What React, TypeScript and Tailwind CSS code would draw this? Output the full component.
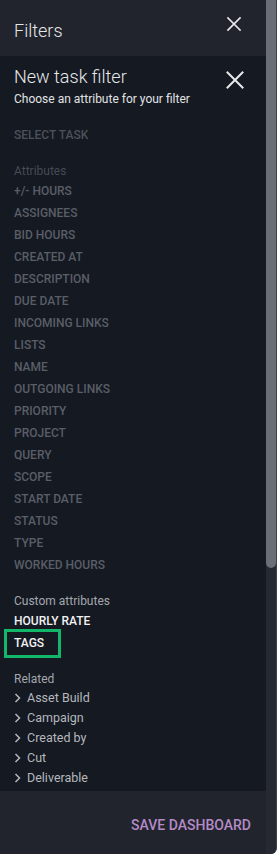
import type { ReactNode } from "react";

const attributes = [
  "+/- HOURS",
  "ASSIGNEES",
  "BID HOURS",
  "CREATED AT",
  "DESCRIPTION",
  "DUE DATE",
  "INCOMING LINKS",
  "LISTS",
  "NAME",
  "OUTGOING LINKS",
  "PRIORITY",
  "PROJECT",
  "QUERY",
  "SCOPE",
  "START DATE",
  "STATUS",
  "TYPE",
  "WORKED HOURS",
];

const related = ["Asset Build", "Campaign", "Created by", "Cut", "Deliverable"];

function CloseIcon({ size, stroke }: { size: number; stroke: number }) {
  return (
    <svg
      width={size}
      height={size}
      viewBox="0 0 24 24"
      fill="none"
      stroke="#e8e9eb"
      strokeWidth={stroke}
      strokeLinecap="square"
    >
      <path d="M6 6l12 12M18 6L6 18" />
    </svg>
  );
}

function Chevron() {
  return (
    <svg width="8" height="10" viewBox="0 0 8 10" fill="none" stroke="#b5b8bd" strokeWidth="1.5">
      <path d="M1.5 1l4 4-4 4" />
    </svg>
  );
}

function SectionLabel({ children, className }: { children: ReactNode; className: string }) {
  return <div className={`h-[18px] text-[12px] leading-[18px] ${className}`}>{children}</div>;
}

export default function App() {
  return (
    <div
      className="flex h-[854px] w-[277px] overflow-hidden rounded-br-[6px] border-r border-[#3d4048] bg-[#21242c]"
      style={{ fontFamily: "Roboto, 'Liberation Sans', sans-serif" }}
    >
      <div className="flex w-[266px] flex-col">
        <header className="flex h-[56px] shrink-0 items-start justify-between pl-[14px] pr-[20px] pt-[19px]">
          <h1 className="text-[18px] font-light leading-[24px] text-[#e6e7e9]">Filters</h1>
          <div className="-mt-[7px]">
            <CloseIcon size={24} stroke={1.7} />
          </div>
        </header>

        <section className="h-[735px] shrink-0 overflow-hidden bg-[#141922] pl-[14px] pt-[9px]">
          <div className="flex items-start justify-between pr-[16px]">
            <div>
              <h2 className="text-[18px] font-light leading-[24px] text-[#e6e7e9]">
                New task filter
              </h2>
              <p className="mt-[2px] text-[12px] leading-[16px] text-[#e2e3e5]">
                Choose an attribute for your filter
              </p>
            </div>
            <CloseIcon size={30} stroke={1.6} />
          </div>

          <div className="mt-[17px] h-[22px] text-[12px] font-medium leading-[22px] text-[#4d5159]">
            SELECT TASK
          </div>

          <SectionLabel className="mt-[16px] text-[#464b53]">Attributes</SectionLabel>
          <ul>
            {attributes.map((name) => (
              <li key={name} className="h-[22px] text-[12px] font-medium leading-[22px] text-[#5a5e66]">
                {name}
              </li>
            ))}
          </ul>

          <SectionLabel className="mt-[16px] text-[#a4a7ad]">Custom attributes</SectionLabel>
          <ul>
            <li className="h-[22px] text-[12px] font-medium leading-[22px] text-[#f2f2f2]">
              HOURLY RATE
            </li>
            <li className="relative h-[22px] text-[12px] font-medium leading-[22px] text-[#f2f2f2]">
              TAGS
              <span className="absolute -left-[10px] -top-[3px] h-[29px] w-[57px] border-[3px] border-[#12b76a]" />
            </li>
          </ul>

          <SectionLabel className="mt-[16px] text-[#a4a7ad]">Related</SectionLabel>
          <ul>
            {related.map((name) => (
              <li
                key={name}
                className="flex h-[20px] items-center gap-[5px] text-[12.5px] leading-[20px] text-[#b5b8bd]"
              >
                <Chevron />
                {name}
              </li>
            ))}
          </ul>
        </section>

        <footer className="flex flex-1 items-start justify-end pr-[15px] pt-[24px]">
          <button className="text-[14px] font-medium leading-[20px] text-[#b48bc6]">
            SAVE DASHBOARD
          </button>
        </footer>
      </div>

      <div className="flex w-[10px] flex-col bg-[#262930]">
        <div className="h-[568px] rounded-b-[5px] bg-[#6b6e74]" />
      </div>
    </div>
  );
}
